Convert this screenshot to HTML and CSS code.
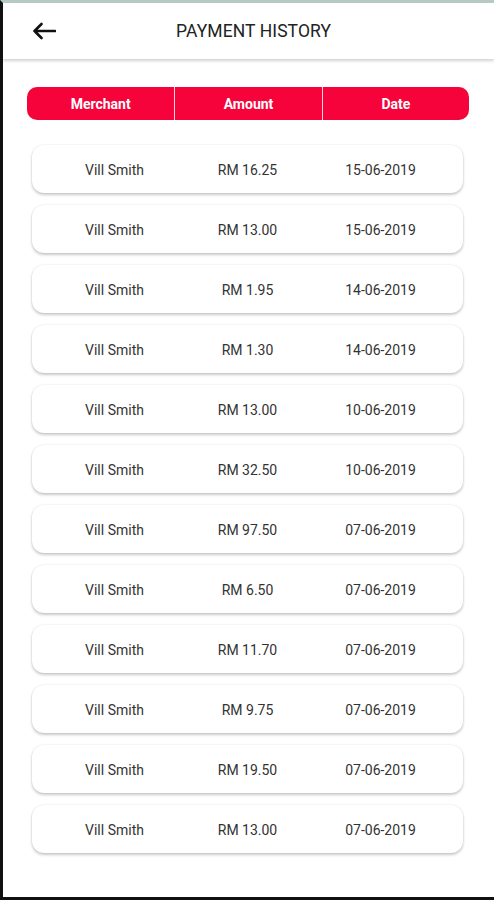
FILE: index.html
```html
<!DOCTYPE html>
<html lang="en">
  <head>
    <title>Payment History</title>
    <link rel="stylesheet" href="styles.css">
  </head>
  <body>
    <div class="screen">
      <!-- Top bar -->
      <div class="topbar">
        <svg class="back" width="24" height="18" viewBox="0 0 24 18">
          <path d="M23 9H2.5M9.5 2L2.5 9l7 7" fill="none" stroke="#111" stroke-width="2.6" stroke-linecap="round" stroke-linejoin="round"/>
        </svg>
        <span class="title">PAYMENT HISTORY</span>
      </div>

      <!-- Table head -->
      <div class="table-head">
        <span>Merchant</span>
        <span>Amount</span>
        <span>Date</span>
      </div>

      <ul class="payments">
        <li><span>Vill Smith</span><span>RM 16.25</span><span>15-06-2019</span></li>
        <li><span>Vill Smith</span><span>RM 13.00</span><span>15-06-2019</span></li>
        <li><span>Vill Smith</span><span>RM 1.95</span><span>14-06-2019</span></li>
        <li><span>Vill Smith</span><span>RM 1.30</span><span>14-06-2019</span></li>
        <li><span>Vill Smith</span><span>RM 13.00</span><span>10-06-2019</span></li>
        <li><span>Vill Smith</span><span>RM 32.50</span><span>10-06-2019</span></li>
        <li><span>Vill Smith</span><span>RM 97.50</span><span>07-06-2019</span></li>
        <li><span>Vill Smith</span><span>RM 6.50</span><span>07-06-2019</span></li>
        <li><span>Vill Smith</span><span>RM 11.70</span><span>07-06-2019</span></li>
        <li><span>Vill Smith</span><span>RM 9.75</span><span>07-06-2019</span></li>
        <li><span>Vill Smith</span><span>RM 19.50</span><span>07-06-2019</span></li>
        <li><span>Vill Smith</span><span>RM 13.00</span><span>07-06-2019</span></li>
      </ul>
    </div>
  </body>
</html>
```

FILE: styles.css
```css
body { margin: 0; background: #fff; font-family: Roboto, "Liberation Sans", Arial, sans-serif; }

/* Phone frame */
.screen {
  height: 900px;
  box-sizing: border-box;
  border-top: 3px solid #b7cac2;
  border-left: 3px solid #111;
  border-bottom: 3px solid #111;
  background: #fff;
  overflow: hidden;
}

/* Top bar */
.topbar {
  height: 56px;
  display: flex;
  align-items: center;
  padding: 0 29px;
  background: #fff;
  box-shadow: 0 2px 3px rgba(0, 0, 0, 0.18);
}
.back { display: block; }
.title {
  margin-left: 120px;
  font-size: 17.5px;
  color: #222;
  letter-spacing: 0.1px;
}

/* Red table header */
.table-head {
  display: grid;
  grid-template-columns: 1fr 1fr 1fr;
  margin: 28px 25px 0 24px;
  height: 33px;
  background: #f5033a;
  border-radius: 10px;
  overflow: hidden;
}
.table-head span {
  display: flex;
  align-items: center;
  justify-content: center;
  color: #fff;
  font-weight: bold;
  font-size: 14px;
}
.table-head span + span { border-left: 1px solid #fbd3dc; }

/* Payment rows */
.payments {
  list-style-type: none;
  margin: 25px 31px 0 29px;
  padding: 0;
  display: flex;
  flex-direction: column;
  gap: 12px;
}
.payments li {
  height: 48px;
  display: grid;
  grid-template-columns: 1fr 1fr 1fr;
  align-items: center;
  padding: 0 16px;
  background: #fff;
  border-radius: 12px;
  box-shadow: 0 0 2px rgba(0, 0, 0, 0.12), 0 2px 3px rgba(0, 0, 0, 0.2);
}
.payments li span {
  text-align: center;
  font-size: 14px;
  color: #333;
  padding-top: 1px;
}
```
